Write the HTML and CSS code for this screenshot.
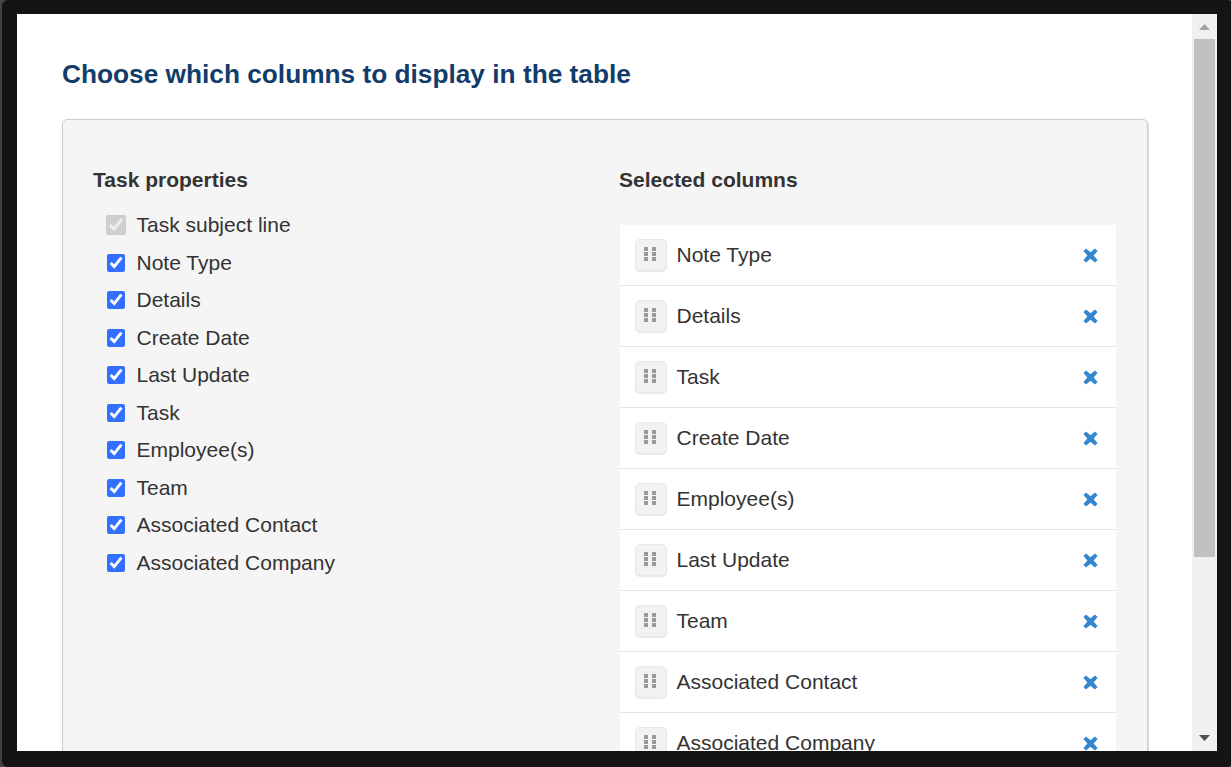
FILE: index.html
```html
<!DOCTYPE html>
<html lang="en">
<head>
<meta charset="utf-8">
<title>Choose columns</title>
<link rel="stylesheet" href="styles.css">
</head>
<body>
<div class="frame">
  <div class="modal">
    <main class="content">
      <h1 class="title">Choose which columns to display in the table</h1>
      <section class="panel">
        <div class="col-left">
          <h2 class="heading">Task properties</h2>
          <ul class="props">
            <li class="prop"><input type="checkbox" class="check check-locked" checked disabled><span>Task subject line</span></li>
            <li class="prop"><input type="checkbox" class="check" checked><span>Note Type</span></li>
            <li class="prop"><input type="checkbox" class="check" checked><span>Details</span></li>
            <li class="prop"><input type="checkbox" class="check" checked><span>Create Date</span></li>
            <li class="prop"><input type="checkbox" class="check" checked><span>Last Update</span></li>
            <li class="prop"><input type="checkbox" class="check" checked><span>Task</span></li>
            <li class="prop"><input type="checkbox" class="check" checked><span>Employee(s)</span></li>
            <li class="prop"><input type="checkbox" class="check" checked><span>Team</span></li>
            <li class="prop"><input type="checkbox" class="check" checked><span>Associated Contact</span></li>
            <li class="prop"><input type="checkbox" class="check" checked><span>Associated Company</span></li>
          </ul>
        </div>
        <div class="col-right">
          <h2 class="heading">Selected columns</h2>
          <ul class="selected">
            <li class="row"><span class="handle"><svg class="dots" viewBox="0 0 12 14"><path d="M0 0h4v4H0zM8 0h4v4H8zM0 5h4v4H0zM8 5h4v4H8zM0 10h4v4H0zM8 10h4v4H8z"/></svg></span><span class="label">Note Type</span><svg class="remove" viewBox="0 0 16 16"><path d="M2.6 4.6 4.6 2.6 8 5.6 11.4 2.6 13.4 4.6 10.4 8 13.4 11.4 11.4 13.4 8 10.4 4.6 13.4 2.6 11.4 5.6 8z"/></svg></li>
            <li class="row"><span class="handle"><svg class="dots" viewBox="0 0 12 14"><path d="M0 0h4v4H0zM8 0h4v4H8zM0 5h4v4H0zM8 5h4v4H8zM0 10h4v4H0zM8 10h4v4H8z"/></svg></span><span class="label">Details</span><svg class="remove" viewBox="0 0 16 16"><path d="M2.6 4.6 4.6 2.6 8 5.6 11.4 2.6 13.4 4.6 10.4 8 13.4 11.4 11.4 13.4 8 10.4 4.6 13.4 2.6 11.4 5.6 8z"/></svg></li>
            <li class="row"><span class="handle"><svg class="dots" viewBox="0 0 12 14"><path d="M0 0h4v4H0zM8 0h4v4H8zM0 5h4v4H0zM8 5h4v4H8zM0 10h4v4H0zM8 10h4v4H8z"/></svg></span><span class="label">Task</span><svg class="remove" viewBox="0 0 16 16"><path d="M2.6 4.6 4.6 2.6 8 5.6 11.4 2.6 13.4 4.6 10.4 8 13.4 11.4 11.4 13.4 8 10.4 4.6 13.4 2.6 11.4 5.6 8z"/></svg></li>
            <li class="row"><span class="handle"><svg class="dots" viewBox="0 0 12 14"><path d="M0 0h4v4H0zM8 0h4v4H8zM0 5h4v4H0zM8 5h4v4H8zM0 10h4v4H0zM8 10h4v4H8z"/></svg></span><span class="label">Create Date</span><svg class="remove" viewBox="0 0 16 16"><path d="M2.6 4.6 4.6 2.6 8 5.6 11.4 2.6 13.4 4.6 10.4 8 13.4 11.4 11.4 13.4 8 10.4 4.6 13.4 2.6 11.4 5.6 8z"/></svg></li>
            <li class="row"><span class="handle"><svg class="dots" viewBox="0 0 12 14"><path d="M0 0h4v4H0zM8 0h4v4H8zM0 5h4v4H0zM8 5h4v4H8zM0 10h4v4H0zM8 10h4v4H8z"/></svg></span><span class="label">Employee(s)</span><svg class="remove" viewBox="0 0 16 16"><path d="M2.6 4.6 4.6 2.6 8 5.6 11.4 2.6 13.4 4.6 10.4 8 13.4 11.4 11.4 13.4 8 10.4 4.6 13.4 2.6 11.4 5.6 8z"/></svg></li>
            <li class="row"><span class="handle"><svg class="dots" viewBox="0 0 12 14"><path d="M0 0h4v4H0zM8 0h4v4H8zM0 5h4v4H0zM8 5h4v4H8zM0 10h4v4H0zM8 10h4v4H8z"/></svg></span><span class="label">Last Update</span><svg class="remove" viewBox="0 0 16 16"><path d="M2.6 4.6 4.6 2.6 8 5.6 11.4 2.6 13.4 4.6 10.4 8 13.4 11.4 11.4 13.4 8 10.4 4.6 13.4 2.6 11.4 5.6 8z"/></svg></li>
            <li class="row"><span class="handle"><svg class="dots" viewBox="0 0 12 14"><path d="M0 0h4v4H0zM8 0h4v4H8zM0 5h4v4H0zM8 5h4v4H8zM0 10h4v4H0zM8 10h4v4H8z"/></svg></span><span class="label">Team</span><svg class="remove" viewBox="0 0 16 16"><path d="M2.6 4.6 4.6 2.6 8 5.6 11.4 2.6 13.4 4.6 10.4 8 13.4 11.4 11.4 13.4 8 10.4 4.6 13.4 2.6 11.4 5.6 8z"/></svg></li>
            <li class="row"><span class="handle"><svg class="dots" viewBox="0 0 12 14"><path d="M0 0h4v4H0zM8 0h4v4H8zM0 5h4v4H0zM8 5h4v4H8zM0 10h4v4H0zM8 10h4v4H8z"/></svg></span><span class="label">Associated Contact</span><svg class="remove" viewBox="0 0 16 16"><path d="M2.6 4.6 4.6 2.6 8 5.6 11.4 2.6 13.4 4.6 10.4 8 13.4 11.4 11.4 13.4 8 10.4 4.6 13.4 2.6 11.4 5.6 8z"/></svg></li>
            <li class="row"><span class="handle"><svg class="dots" viewBox="0 0 12 14"><path d="M0 0h4v4H0zM8 0h4v4H8zM0 5h4v4H0zM8 5h4v4H8zM0 10h4v4H0zM8 10h4v4H8z"/></svg></span><span class="label">Associated Company</span><svg class="remove" viewBox="0 0 16 16"><path d="M2.6 4.6 4.6 2.6 8 5.6 11.4 2.6 13.4 4.6 10.4 8 13.4 11.4 11.4 13.4 8 10.4 4.6 13.4 2.6 11.4 5.6 8z"/></svg></li>
          </ul>
        </div>
      </section>
    </main>
    <div class="scrollbar">
      <svg class="arrow arrow-top" viewBox="0 0 11 6"><path class="arrow-up" d="M5.5 0 11 6H0z"/></svg>
      <div class="thumb"></div>
      <div class="track"></div>
      <svg class="arrow arrow-bottom" viewBox="0 0 11 6"><path class="arrow-down" d="M0 0h11L5.5 6z"/></svg>
    </div>
  </div>
</div>
</body>
</html>
```
FILE: styles.css
```css
* { box-sizing: border-box; }
html, body { margin: 0; height: 100%; }
body {
  overflow: hidden;
  background: #444;
  font-family: "Liberation Sans", Arial, sans-serif;
  color: #333;
}
.frame {
  width: 1231px;
  height: 767px;
  margin-left: 2px;
  padding: 14px 14px 16px 15px;
  background: #141414;
  border-radius: 6px;
}
.modal {
  display: flex;
  height: 737px;
  width: 1200px;
  background: #fff;
  overflow: hidden;
}
.content {
  flex: 1;
  min-width: 0;
  padding: 45px 44px 0 45px;
  overflow: hidden;
}
.title {
  margin: 0 0 29px;
  font-size: 26.25px;
  line-height: 31px;
  font-weight: 700;
  color: #123c69;
}
.panel {
  display: flex;
  height: 900px;
  padding: 44px 31px 0 30px;
  background: #f5f5f5;
  border: 1px solid #ccc;
  border-radius: 5px;
  box-shadow: 1px 1px 1px #ddd;
}
.col-left { width: 526px; }
.col-right { flex: 1; }
.heading {
  margin: 0;
  font-size: 21px;
  line-height: 32px;
  font-weight: 700;
  color: #333;
}
.props { list-style: none; margin: 10.5px 0 0; padding: 0 0 0 14px; }
.prop {
  display: flex;
  align-items: center;
  height: 37.5px;
  font-size: 21px;
}
.check {
  width: 18px;
  height: 18px;
  margin: 0 11.5px 0 0;
  accent-color: #3370ff;
}
.check-locked {
  width: 20px;
  height: 20px;
  margin: 0 10.5px 0 -1px;
}
.selected {
  list-style: none;
  margin: 29px 0 0 1px;
  padding: 0;
  background: #fff;
}
.row {
  display: flex;
  align-items: center;
  height: 61px;
  padding: 0 16px 0 15px;
  border-bottom: 1px solid #e5e5e5;
  font-size: 21px;
}
.handle {
  display: flex;
  justify-content: center;
  padding: 7px 3px 0 0;
  width: 32px;
  height: 32px;
  margin-right: 9.5px;
  background: #f2f2f2;
  border: 1px solid #e8e8e8;
  border-radius: 5px;
  box-shadow: 0 1px 1px #e8e8e8;
}
.dots { width: 12px; height: 14px; fill: #999; }
.label { flex: 1; }
.remove { width: 21px; height: 21px; margin-right: -1px; fill: #3585d0; }
.scrollbar {
  flex: none;
  display: flex;
  flex-direction: column;
  align-items: center;
  width: 25px;
  background: #f0f0f0;
}
.arrow { flex: none; width: 11px; height: 6px; }
.arrow-top { margin: 10px 0 9px; }
.arrow-bottom { margin: 0 0 10px; }
.arrow-up { fill: #a3a3a3; }
.arrow-down { fill: #505050; }
.thumb { flex: none; width: 21px; height: 518px; background: #c0c0c0; }
.track { flex: 1; }
```
